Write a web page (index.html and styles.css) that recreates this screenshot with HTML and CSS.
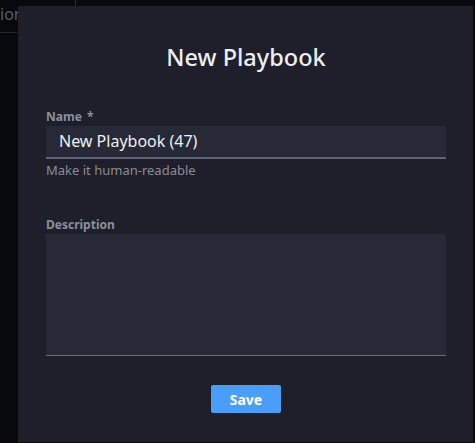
FILE: index.html
```html
<!DOCTYPE html>
<html>
<head>
<meta charset="utf-8">
<link rel="stylesheet" href="styles.css">
</head>
<body>
<div class="backdrop">
  <div class="bg-top">
    <span class="bg-text">ion</span>
  </div>
  <div class="bg-rule"></div>
  <div class="bg-tick"></div>
</div>
<div class="modal">
  <h1 class="title">New Playbook</h1>
  <div class="field">
    <label class="label">Name <span class="req">*</span></label>
    <div class="input">New Playbook (47)</div>
    <div class="hint">Make it human-readable</div>
  </div>
  <div class="field field-desc">
    <label class="label">Description</label>
    <div class="textarea"></div>
  </div>
  <div class="actions">
    <button class="save">Save</button>
  </div>
</div>
</body>
</html>
```
FILE: styles.css
```css
* { box-sizing: border-box; }
html, body {
  margin: 0;
  padding: 0;
  width: 475px;
  height: 443px;
  overflow: hidden;
  background: #08090c;
  font-family: "Noto Sans", "Open Sans", sans-serif;
}
.backdrop {
  position: absolute;
  inset: 0;
  background: #08090c;
}
.bg-top {
  height: 33px;
  padding: 5px 0 0 0;
}
.bg-text {
  display: block;
  margin-left: 0;
  font-size: 16px;
  color: #5a5c66;
  line-height: 18px;
}
.bg-rule {
  position: absolute;
  left: 0;
  top: 32px;
  width: 17px;
  height: 1px;
  background: #24262e;
}
.bg-tick {
  position: absolute;
  left: 75px;
  top: 0;
  width: 1px;
  height: 6px;
  background: #2a2c34;
}
.modal {
  position: absolute;
  left: 18px;
  top: 6px;
  width: 455px;
  height: 436px;
  background: #1e1f2a;
  padding: 35px 27px 0 28px;
  display: flex;
  flex-direction: column;
}
.title {
  margin: 0;
  text-align: center;
  font-size: 23.5px;
  font-weight: 500;
  line-height: 32px;
  color: #eceef2;
}
.field {
  margin-top: 36px;
  display: flex;
  flex-direction: column;
}
.label {
  display: block;
  font-size: 12px;
  font-weight: 700;
  line-height: 16px;
  color: #8d909c;
  margin-bottom: 1px;
}
.req { margin-left: 2px; }
.input {
  height: 33px;
  background: #272a36;
  border-bottom: 2px solid #5f6279;
  color: #eef0f4;
  font-size: 16px;
  line-height: 31px;
  padding-left: 13px;
}
.hint {
  margin-top: 3px;
  font-size: 13px;
  line-height: 17px;
  color: #8a8d98;
}
.field-desc {
  margin-top: 38px;
}
.textarea {
  height: 122px;
  background: #272a36;
  border-bottom: 1px solid #666979;
}
.actions {
  display: flex;
  justify-content: center;
  margin-top: 29px;
}
.save {
  width: 70px;
  height: 28px;
  border: none;
  border-radius: 2px;
  background: #4a9ef8;
  color: #ffffff;
  font-family: "Noto Sans", sans-serif;
  font-size: 14px;
  font-weight: 700;
  padding: 0;
}
```
